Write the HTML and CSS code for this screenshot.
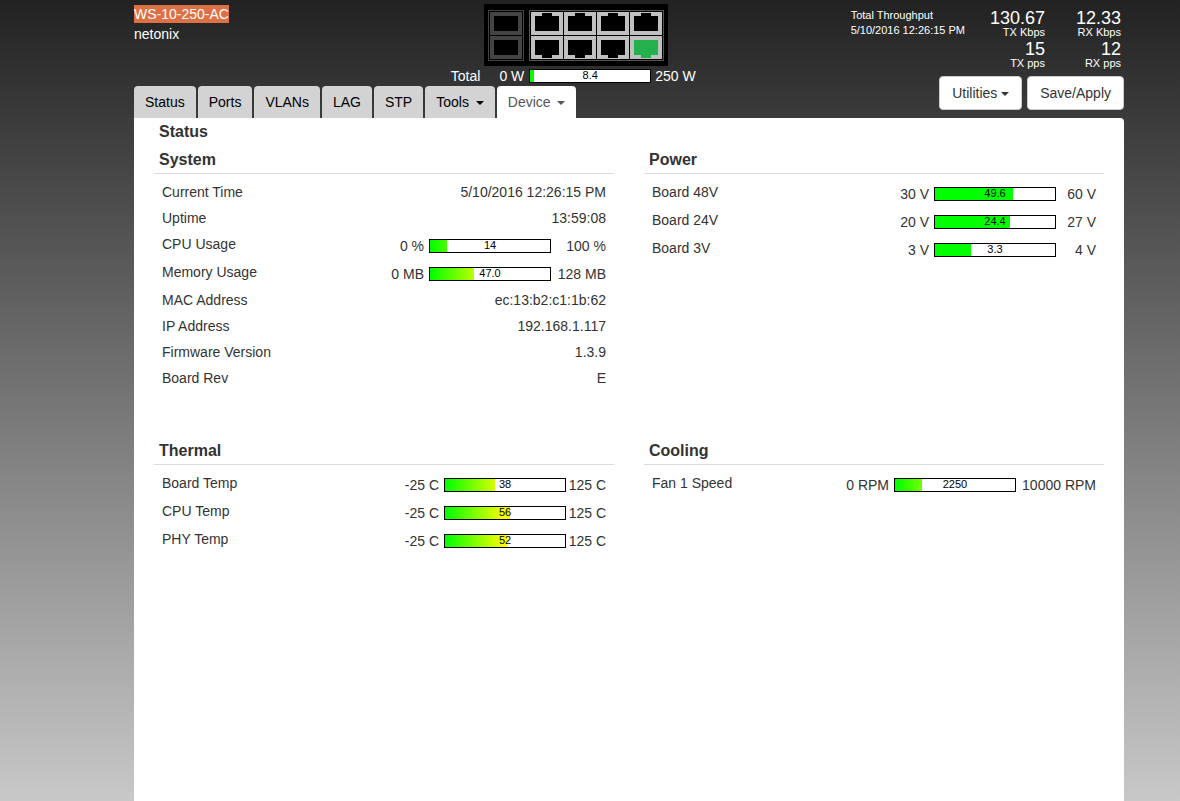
FILE: index.html
```html
<!DOCTYPE html>
<html lang="en">
<head>
    <meta charset="UTF-8">
    <meta name="viewport" content="width=device-width, initial-scale=1.0">
    <title>netonix - WS-10-250-AC</title>
    <link rel="stylesheet" href="styles.css">
</head>
<body>

    <div class="mainContainer">

        <header class="topBar">
            <div class="deviceName">
                <div><span class="model">WS-10-250-AC</span></div>
                <div>netonix</div>
            </div>

            <div class="switchView">
                <svg class="ports" width="184" height="62" viewBox="0 0 184 62" shape-rendering="crispEdges" role="img" aria-label="Switch ports">
                    <defs>
                        <path id="jackTop" d="M4 4h7v-3h10v3h7v15h-24z"/>
                        <path id="jackBottom" d="M4 4h24v15h-7v3h-10v-3h-7z"/>
                    </defs>
                    <rect width="184" height="62" fill="#000"/>
                    <!-- SFP cages -->
                    <path d="M4 6h36v51h-36zM5 7v49h34v-49z" fill="#444" fill-rule="evenodd"/>
                    <path d="M6 8h32v23h-32zM10 12v15h24v-15z" fill="#444" fill-rule="evenodd"/>
                    <path d="M6 32h32v23h-32zM10 36v15h24v-15z" fill="#444" fill-rule="evenodd"/>
                    <!-- RJ45 ports -->
                    <path d="M45 6h135v51h-135zM46 7v49h133v-49z" fill="#555" fill-rule="evenodd"/>
                    <g fill="#c0c0c0">
                        <rect x="47" y="8" width="32" height="23"/>
                        <rect x="80" y="8" width="32" height="23"/>
                        <rect x="113" y="8" width="32" height="23"/>
                        <rect x="146" y="8" width="32" height="23"/>
                        <rect x="47" y="32" width="32" height="23"/>
                        <rect x="80" y="32" width="32" height="23"/>
                        <rect x="113" y="32" width="32" height="23"/>
                        <rect x="146" y="32" width="32" height="23"/>
                    </g>
                    <use href="#jackTop" x="47" y="8"/>
                    <use href="#jackTop" x="80" y="8"/>
                    <use href="#jackTop" x="113" y="8"/>
                    <use href="#jackTop" x="146" y="8"/>
                    <use href="#jackBottom" x="47" y="32"/>
                    <use href="#jackBottom" x="80" y="32"/>
                    <use href="#jackBottom" x="113" y="32"/>
                    <use href="#jackBottom" x="146" y="32" fill="#22b14c"/>
                </svg>
                <div class="totalPower">
                    <span class="totalLabel">Total</span>
                    <div class="gauge">
                        <span class="min">0 W</span>
                        <div class="bar"><div class="fill flat" style="width: 3.4%"></div><span class="value">8.4</span></div>
                        <span class="max">250 W</span>
                    </div>
                </div>
            </div>

            <div class="throughput">
                <div class="throughputTitle">
                    <div>Total Throughput</div>
                    <div>5/10/2016 12:26:15 PM</div>
                </div>
                <div class="rates">
                    <div class="number">130.67</div>
                    <div class="unit">TX Kbps</div>
                    <div class="number">15</div>
                    <div class="unit">TX pps</div>
                </div>
                <div class="rates">
                    <div class="number">12.33</div>
                    <div class="unit">RX Kbps</div>
                    <div class="number">12</div>
                    <div class="unit">RX pps</div>
                </div>
            </div>
        </header>

        <div class="menuBar">
            <nav class="tabs">
                <a href="#status">Status</a>
                <a href="#ports">Ports</a>
                <a href="#vlans">VLANs</a>
                <a href="#lag">LAG</a>
                <a href="#stp">STP</a>
                <a href="#tools">Tools <span class="caret"></span></a>
                <a href="#device" class="active">Device <span class="caret"></span></a>
            </nav>
            <div class="buttons">
                <button type="button">Utilities <span class="caret"></span></button>
                <button type="button">Save/Apply</button>
            </div>
        </div>

        <main class="panel" id="status">
            <h1>Status</h1>

            <div class="sections">
                <section class="system">
                    <h2>System</h2>
                    <table>
                        <tr><th>Current Time</th><td>5/10/2016 12:26:15 PM</td></tr>
                        <tr><th>Uptime</th><td>13:59:08</td></tr>
                        <tr>
                            <th>CPU Usage</th>
                            <td><div class="gauge"><span class="min">0 %</span><div class="bar"><div class="fill" style="width: 14%"></div><span class="value">14</span></div><span class="max">100 %</span></div></td>
                        </tr>
                        <tr>
                            <th>Memory Usage</th>
                            <td><div class="gauge"><span class="min">0 MB</span><div class="bar"><div class="fill" style="width: 36.7%"></div><span class="value">47.0</span></div><span class="max">128 MB</span></div></td>
                        </tr>
                        <tr><th>MAC Address</th><td>ec:13:b2:c1:1b:62</td></tr>
                        <tr><th>IP Address</th><td>192.168.1.117</td></tr>
                        <tr><th>Firmware Version</th><td>1.3.9</td></tr>
                        <tr><th>Board Rev</th><td>E</td></tr>
                    </table>
                </section>

                <section class="power">
                    <h2>Power</h2>
                    <table>
                        <tr>
                            <th>Board 48V</th>
                            <td><div class="gauge"><span class="min">30 V</span><div class="bar"><div class="fill flat" style="width: 65.3%"></div><span class="value">49.6</span></div><span class="max">60 V</span></div></td>
                        </tr>
                        <tr>
                            <th>Board 24V</th>
                            <td><div class="gauge"><span class="min">20 V</span><div class="bar"><div class="fill flat" style="width: 62.9%"></div><span class="value">24.4</span></div><span class="max">27 V</span></div></td>
                        </tr>
                        <tr>
                            <th>Board 3V</th>
                            <td><div class="gauge"><span class="min">3 V</span><div class="bar"><div class="fill flat" style="width: 30%"></div><span class="value">3.3</span></div><span class="max">4 V</span></div></td>
                        </tr>
                    </table>
                </section>

                <section class="thermal">
                    <h2>Thermal</h2>
                    <table>
                        <tr>
                            <th>Board Temp</th>
                            <td><div class="gauge"><span class="min">-25 C</span><div class="bar"><div class="fill" style="width: 42%"></div><span class="value">38</span></div><span class="max">125 C</span></div></td>
                        </tr>
                        <tr>
                            <th>CPU Temp</th>
                            <td><div class="gauge"><span class="min">-25 C</span><div class="bar"><div class="fill" style="width: 54%"></div><span class="value">56</span></div><span class="max">125 C</span></div></td>
                        </tr>
                        <tr>
                            <th>PHY Temp</th>
                            <td><div class="gauge"><span class="min">-25 C</span><div class="bar"><div class="fill" style="width: 51.3%"></div><span class="value">52</span></div><span class="max">125 C</span></div></td>
                        </tr>
                    </table>
                </section>

                <section class="cooling">
                    <h2>Cooling</h2>
                    <table>
                        <tr>
                            <th>Fan 1 Speed</th>
                            <td><div class="gauge"><span class="min">0 RPM</span><div class="bar"><div class="fill" style="width: 22.5%"></div><span class="value">2250</span></div><span class="max">10000 RPM</span></div></td>
                        </tr>
                    </table>
                </section>
            </div>
        </main>

    </div>

</body>
</html>
```
FILE: styles.css
```css
* {
    margin: 0;
    padding: 0;
    box-sizing: border-box;
}

body {
    min-height: 100vh;
    display: flex;
    font-family: "Liberation Sans", Arial, sans-serif;
    font-size: 14px;
    line-height: 20px;
    color: #333;
    background-image: linear-gradient(to bottom, #222 0%, #444 20%, #c8c8c8 100%);
}

.mainContainer {
    flex: 1;
    display: flex;
    flex-direction: column;
    margin: 0 56px 0 134px;
}

/* header */

.topBar {
    display: grid;
    grid-template-columns: 32% auto 1fr;
    height: 86px;
    padding-top: 4px;
    color: white;
}

.model {
    padding: 1px 0;
    background-color: #dd7044;
}

.ports {
    display: block;
    margin-left: 33px;
}

.totalPower {
    display: flex;
    gap: 19px;
}

.throughput {
    display: flex;
    justify-content: flex-end;
    padding: 4px 3px 0 0;
    font-size: 11px;
}

.throughputTitle {
    line-height: 15px;
}

.rates {
    width: 76px;
    text-align: right;
}

.throughputTitle + .rates {
    width: 80px;
}

.number {
    font-size: 18px;
    line-height: 20px;
}

.unit {
    padding-bottom: 2px;
    line-height: 9px;
}

/* tabs and buttons */

.menuBar {
    display: flex;
    justify-content: space-between;
}

.tabs {
    display: flex;
    gap: 2px;
}

.tabs a {
    height: 32px;
    padding: 0 11px;
    line-height: 32px;
    color: black;
    text-decoration: none;
    background-color: #d3d3d3;
    border-radius: 4px 4px 0 0;
}

.tabs .active {
    color: #555;
    background-color: white;
}

.caret {
    display: inline-block;
    margin-left: 3px;
    vertical-align: middle;
    border-top: 4px solid;
    border-left: 4px solid transparent;
    border-right: 4px solid transparent;
}

.buttons {
    display: flex;
    gap: 5px;
    margin-top: -10px;
}

.buttons button {
    height: 34px;
    padding: 0 12px;
    font: inherit;
    color: #333;
    background-color: white;
    border: 1px solid #ccc;
    border-radius: 4px;
}

.buttons .caret {
    margin-left: 0;
}

/* status panel */

.panel {
    flex: 1;
    padding: 0 20px;
    background-color: white;
    border-radius: 0 4px 0 0;
}

h1 {
    padding-left: 5px;
    font-size: 16px;
    line-height: 27px;
}

h2 {
    padding: 2px 0 0 5px;
    margin-bottom: 5px;
    font-size: 16px;
    line-height: 26px;
    border-bottom: 1px solid #ddd;
}

.sections {
    display: grid;
    grid-template-columns: 1fr 1fr;
    gap: 45px 30px;
}

table {
    width: 100%;
    border-collapse: collapse;
}

th, td {
    padding: 3px 8px;
    vertical-align: top;
}

th {
    font-weight: normal;
    text-align: left;
}

td {
    text-align: right;
}

/* gauges */

.gauge {
    display: flex;
    align-items: center;
    justify-content: flex-end;
    white-space: nowrap;
}

td .gauge {
    padding-top: 2px;
}

.min {
    margin-right: 5px;
}

.bar {
    position: relative;
    width: 122px;
    height: 14px;
    background-color: white;
    border: 1px solid black;
}

.fill {
    height: 100%;
    background-image: linear-gradient(to right, #0f0, #ff0 60px, #f00 120px);
    background-size: 120px 100%;
}

.flat {
    background-image: none;
    background-color: #0f0;
}

.value {
    position: absolute;
    top: 0;
    left: 0;
    width: 100%;
    font-size: 11px;
    line-height: 11px;
    text-align: center;
    color: black;
}

.max {
    width: 40px;
    text-align: right;
}

.totalPower .max {
    width: auto;
    margin-left: 4px;
}

.system .max {
    width: 55px;
}

.cooling .max {
    width: 80px;
}
```
